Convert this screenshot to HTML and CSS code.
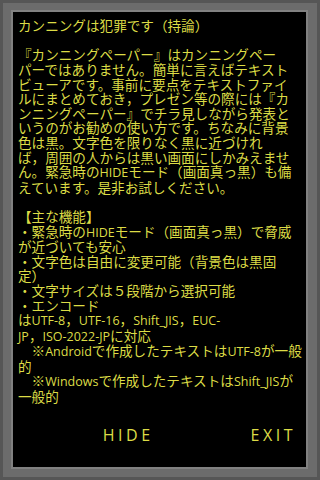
FILE: index.html
```html
<!DOCTYPE html>
<html lang="ja">
<head>
<meta charset="utf-8">
<link rel="stylesheet" href="styles.css">
</head>
<body>
<div class="screen">
  <div class="frame">
    <div class="panel">
      <div class="title">カンニングは犯罪です（持論）</div>
      <div class="body">『カンニングペーパー』はカンニングペー<br>パーではありません。簡単に言えばテキスト<br>ビューアです。事前に要点をテキストファイ<br>ルにまとめておき，プレゼン等の際には『カ<br>ンニングペーパー』でチラ見しながら発表と<br>いうのがお勧めの使い方です。ちなみに背景<br>色は黒。文字色を限りなく黒に近づけれ<br>ば，周囲の人からは黒い画面にしかみえませ<br>ん。緊急時の<span class="en">HIDE</span>モード（画面真っ黒）も備<br>えています。是非お試しください。<br><br>【主な機能】<br>・緊急時の<span class="en">HIDE</span>モード（画面真っ黒）で脅威<br>が近づいても安心<br>・文字色は自由に変更可能（背景色は黒固<br>定）<br>・文字サイズは５段階から選択可能<br>・エンコード<br>は<span class="en">UTF-8</span>，<span class="en">UTF-16</span>，<span class="en">Shift_JIS</span>，<span class="en">EUC-</span><br><span class="en">JP</span>，<span class="en">ISO-2022-JP</span>に対応<br>　※<span class="en">Android</span>で作成したテキストは<span class="en">UTF-8</span>が一般<br>的<br>　※<span class="en">Windows</span>で作成したテキストは<span class="en">Shift_JIS</span>が<br>一般的</div>
      <div class="buttons">
        <span class="btn hide">HIDE</span>
        <span class="btn exit">EXIT</span>
      </div>
    </div>
  </div>
</div>
</body>
</html>
```

FILE: styles.css
```css
html, body {
  margin: 0;
  padding: 0;
  background: #555555;
}
.screen {
  width: 320px;
  height: 480px;
  box-sizing: border-box;
  padding: 3px;
  background: #565656;
}
.frame {
  height: 100%;
  box-sizing: border-box;
  padding: 7px 9px 8px 8px;
  background: #6c6c6c;
}
.panel {
  height: 100%;
  box-sizing: border-box;
  border: 2px solid #818181;
  background: #000000;
  color: #dcdc46;
  font-family: "Noto Sans CJK JP", sans-serif;
  font-size: 13.6px;
  line-height: 14.63px;
  padding: 6px 0 0 5px;
  display: flex;
  flex-direction: column;
}
.title {
  white-space: nowrap;
}
.body {
  margin-top: 14.63px;
  white-space: nowrap;
  flex: 1;
}
.en {
  font-family: "Open Sans", "Noto Sans", sans-serif;
  font-size: 12.5px;
  line-height: 1;
}
.buttons {
  display: flex;
  justify-content: flex-end;
  align-items: center;
  height: 40px;
  margin-bottom: 12px;
  padding-right: 10px;
}
.btn {
  font-family: "Open Sans", sans-serif;
  font-size: 16px;
  letter-spacing: 3.5px;
  color: #dcdc46;
}
.hide {
  margin-right: 97px;
}
```
